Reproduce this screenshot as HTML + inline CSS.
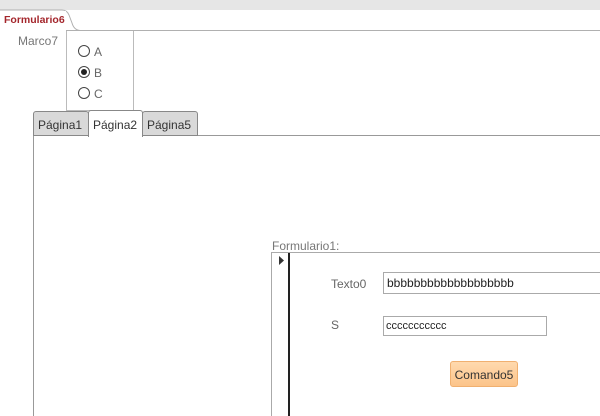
<!DOCTYPE html>
<html style="width:600px;height:416px;overflow:hidden"><head><meta charset="utf-8"><style>
*{margin:0;padding:0;box-sizing:border-box}
body{width:600px;height:416px;background:#fff;position:relative;overflow:hidden;font-family:"Liberation Sans",sans-serif;font-size:12px;color:#555}
.a{position:absolute}
</style></head><body>
<div class="a" style="left:0;top:0;width:600px;height:10px;background:#e6e6e6"></div>
<div class="a" style="left:0;top:30px;width:600px;height:1px;background:#b0b0b0"></div>
<svg class="a" style="left:0;top:9px" width="80" height="23"><path d="M0 1 H62 Q67 1 69 6 L72 14 Q74 21 80 21.5" fill="#fff" stroke="#b0b0b0"/><rect x="0" y="2" width="66" height="20" fill="#fff"/></svg>
<div class="a" style="left:4px;top:14px;font-size:10.5px;font-weight:bold;color:#a4262c">Formulario6</div>
<div class="a" style="left:18px;top:34px;font-size:12px;color:#777">Marco7</div>
<div class="a" style="left:66px;top:31px;width:68px;height:80px;border:1px solid #bbb;border-top:none"></div>
<div class="a" style="left:78px;top:45px;width:12px;height:12px;border:1px solid #444;border-radius:50%"></div>
<div class="a" style="left:94px;top:45px;font-size:12px;color:#666">A</div>
<div class="a" style="left:78px;top:66px;width:12px;height:12px;border:1px solid #444;border-radius:50%"></div>
<div class="a" style="left:81px;top:69px;width:6px;height:6px;background:#222;border-radius:50%"></div>
<div class="a" style="left:94px;top:66px;font-size:12px;color:#666">B</div>
<div class="a" style="left:78px;top:87px;width:12px;height:12px;border:1px solid #444;border-radius:50%"></div>
<div class="a" style="left:94px;top:87px;font-size:12px;color:#666">C</div>
<div class="a" style="left:33px;top:135px;width:567px;height:281px;border:1px solid #999;border-right:none;border-bottom:none"></div>
<div class="a" style="left:33px;top:111px;width:56px;height:25px;background:#d9d9d9;border:1px solid #888;border-radius:3px 3px 0 0;padding:6px 0 0 4px;color:#333">Página1</div>
<div class="a" style="left:88px;top:110px;width:55px;height:27px;background:#fff;border:1px solid #888;border-bottom:none;border-radius:3px 3px 0 0;padding:7px 0 0 4px;color:#333">Página2</div>
<div class="a" style="left:142px;top:111px;width:56px;height:25px;background:#d9d9d9;border:1px solid #888;border-radius:3px 3px 0 0;padding:6px 0 0 4px;color:#333">Página5</div>
<div class="a" style="left:272px;top:239px;color:#777">Formulario1:</div>
<div class="a" style="left:271px;top:252px;width:329px;height:164px;border:1px solid #aaa;border-right:none;border-bottom:none"></div>
<div class="a" style="left:288px;top:253px;width:2px;height:163px;background:#222"></div>
<svg class="a" style="left:278px;top:256px" width="8" height="9"><path d="M1 0 L6 4.5 L1 9 Z" fill="#333"/></svg>
<div class="a" style="left:331px;top:277px;color:#666">Texto0</div>
<div class="a" style="left:383px;top:272px;width:217px;height:22px;border:1px solid #aaa;border-right:none;padding:3px 0 0 3px;color:#222;font-size:12px">bbbbbbbbbbbbbbbbbbb</div>
<div class="a" style="left:331px;top:318px;color:#666">S</div>
<div class="a" style="left:383px;top:316px;width:164px;height:20px;border:1px solid #aaa;padding:3px 0 0 2px;color:#222;font-size:11px">ccccccccccc</div>
<div class="a" style="left:450px;top:361px;width:68px;height:26px;background:linear-gradient(#ffd9ae,#fcc48a);border:1px solid #f0b070;border-radius:3px;color:#333;text-align:center;padding-top:6px">Comando5</div>
</body></html>
